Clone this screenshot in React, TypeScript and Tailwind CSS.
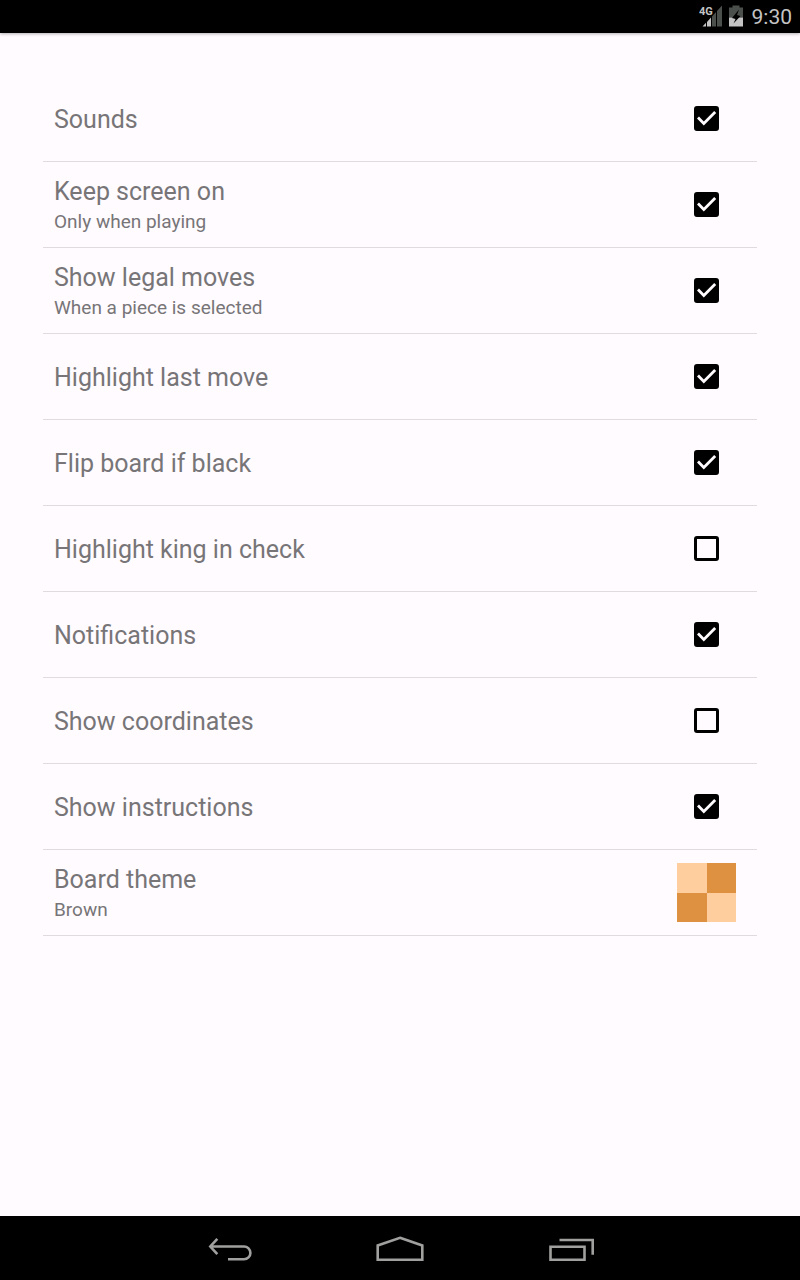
import { useState } from "react";

type Setting = { id: string; title: string; detail?: string; on: boolean };

const initialSettings: Setting[] = [
  { id: "sounds", title: "Sounds", on: true },
  { id: "awake", title: "Keep screen on", detail: "Only when playing", on: true },
  { id: "legal", title: "Show legal moves", detail: "When a piece is selected", on: true },
  { id: "last", title: "Highlight last move", on: true },
  { id: "flip", title: "Flip board if black", on: true },
  { id: "king", title: "Highlight king in check", on: false },
  { id: "notifications", title: "Notifications", on: true },
  { id: "coordinates", title: "Show coordinates", on: false },
  { id: "instructions", title: "Show instructions", on: true },
];

const rowClass =
  "flex h-[86px] items-center justify-between border-b border-[#dfdbde] pl-[11px] pr-[21px]";

function RowText({ title, detail }: { title: string; detail?: string }) {
  return (
    <span className="flex flex-col pt-[2px] text-left">
      <span className="text-[25px] leading-8">{title}</span>
      {detail && <span className="text-[19px] leading-7">{detail}</span>}
    </span>
  );
}

function CheckRow({ setting, onToggle }: { setting: Setting; onToggle: () => void }) {
  return (
    <li className={rowClass}>
      <label htmlFor={setting.id} className="grow">
        <RowText title={setting.title} detail={setting.detail} />
      </label>
      <span className="grid w-[59px] place-items-center">
        <input
          id={setting.id}
          type="checkbox"
          checked={setting.on}
          onChange={onToggle}
          className="peer col-start-1 row-start-1 size-[25px] appearance-none rounded-[3px] border-3 border-black checked:bg-black"
        />
        <svg
          viewBox="0 0 25 25"
          className="pointer-events-none invisible col-start-1 row-start-1 size-[25px] peer-checked:visible"
          fill="none"
          stroke="#fffbfe"
          strokeWidth="2.8"
        >
          <path d="M4 11.6 L9.8 17.4 L21.2 6" />
        </svg>
      </span>
    </li>
  );
}

function StatusBar() {
  return (
    <header className="flex h-[33px] items-center justify-end bg-black pr-2 text-[#c4c4c4] shadow-[0_1px_3px_rgba(0,0,0,0.3)]">
      <svg viewBox="0 0 24 25" className="mr-[6px] h-[25px] w-6" role="img" aria-label="4G signal">
        <path d="M13 12.5l4-4.4V22.500h-4zM18 7L23 1.500v21h-5z" fill="#4c504c" />
        <path d="M3.500 22.500l3.500-3.800v3.800zM8 18l4-4.400v8.900H8z" fill="#c4c4c4" />
        <text x="0" y="11" fontSize="11" fontWeight="700" fontFamily="Roboto, sans-serif" fill="#c4c4c4">4G</text>
      </svg>
      <svg viewBox="0 0 14 25" className="mr-[9px] h-[25px] w-[14px]" role="img" aria-label="Battery">
        <path d="M3.5 1.500h7v2H14v10H0v-10h3.500z" fill="#4c504c" />
        <path d="M0 13.500h14v9H0z" fill="#c4c4c4" />
        <path d="M10 5.500L3 14l3.500 1L4.500 19.500l7-7.500L8 11z" fill="#000" />
      </svg>
      <span className="pt-[2px] text-[21px] leading-[31px]">9:30</span>
    </header>
  );
}

function NavBar() {
  const button = "flex w-[170px] items-center justify-center";
  const icon = "h-8 w-12";
  return (
    <nav className="flex h-16 justify-center bg-black text-[#a0a09f]">
      <button type="button" aria-label="Back" className={button}>
        <svg viewBox="0 0 48 32" className={icon} fill="none" stroke="currentColor" strokeWidth="2.6">
          <path d="M11.300 6.800L4.300 14.500l7 7.700M4.300 14.500H38a6.300 6.300 0 0 1 0 12.800H22" />
        </svg>
      </button>
      <button type="button" aria-label="Home" className={button}>
        <svg viewBox="0 0 48 32" className={icon} fill="none" stroke="currentColor" strokeWidth="2.6">
          <path d="M24 5.8l22.300 7.700v14.200H1.700V13.500z" />
        </svg>
      </button>
      <button type="button" aria-label="Recent apps" className={button}>
        <svg viewBox="0 0 48 32" className={icon} fill="none" stroke="currentColor" strokeWidth="2.6">
          <path d="M4.500 14.700h34v13h-34zM13.500 8h33.200v14.800" />
        </svg>
      </button>
    </nav>
  );
}

export default function App() {
  const [settings, setSettings] = useState(initialSettings);
  const toggle = (id: string) =>
    setSettings((all) => all.map((s) => (s.id === id ? { ...s, on: !s.on } : s)));

  return (
    <div className="flex min-h-screen flex-col bg-[#fffbfe] font-[Roboto,sans-serif] text-[#777578]">
      <StatusBar />
      <main className="grow p-[43px]">
        <ul>
          {settings.map((s) => (
            <CheckRow key={s.id} setting={s} onToggle={() => toggle(s.id)} />
          ))}
          <li>
            <button type="button" className={`${rowClass} w-full`}>
              <RowText title="Board theme" detail="Brown" />
              <span className="grid size-[59px] grid-cols-[30px_29px] grid-rows-[30px_29px]">
                <span className="bg-[#ffce9e]" />
                <span className="bg-[#dd9141]" />
                <span className="bg-[#dd9141]" />
                <span className="bg-[#ffce9e]" />
              </span>
            </button>
          </li>
        </ul>
      </main>
      <NavBar />
    </div>
  );
}
